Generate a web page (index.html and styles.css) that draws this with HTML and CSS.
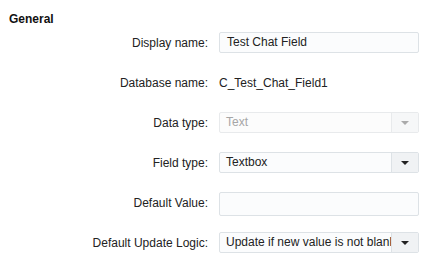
FILE: index.html
```html
<!DOCTYPE html>
<html lang="en">
<head>
    <meta charset="UTF-8">
    <title>Field settings</title>
    <link rel="stylesheet" href="styles.css">
</head>
<body>
    <div class="section">
        <h3 class="section-title">General</h3>
        <div class="form-grid">
            <label class="field-label">Display name:</label>
            <div class="text-input">Test Chat Field</div>

            <label class="field-label">Database name:</label>
            <div class="plain-value">C_Test_Chat_Field1</div>

            <label class="field-label">Data type:</label>
            <div class="select disabled">
                <span class="select-value">Text</span>
                <span class="select-btn"><span class="caret"></span></span>
            </div>

            <label class="field-label">Field type:</label>
            <div class="select">
                <span class="select-value">Textbox</span>
                <span class="select-btn"><span class="caret"></span></span>
            </div>

            <label class="field-label">Default Value:</label>
            <div class="text-input tall"></div>

            <label class="field-label">Default Update Logic:</label>
            <div class="select">
                <span class="select-value">Update if new value is not blank</span>
                <span class="select-btn"><span class="caret"></span></span>
            </div>
        </div>
    </div>
</body>
</html>
```

FILE: styles.css
```css
* {
    margin: 0;
    padding: 0;
    box-sizing: border-box;
}
body {
    font-family: "Liberation Sans", Arial, sans-serif;
    font-size: 12px;
    color: #222;
    background: #fff;
}
.section {
    padding: 12px 9px;
}
.section-title {
    font-size: 12px;
    font-weight: bold;
    line-height: 14px;
    color: #111;
    margin-bottom: 6px;
}
.form-grid {
    display: grid;
    grid-template-columns: 199px 200px;
    grid-auto-rows: 21px;
    column-gap: 11px;
    row-gap: 19px;
    align-items: center;
}
.field-label {
    text-align: right;
    white-space: nowrap;
    color: #222;
}
.text-input {
    height: 21px;
    border: 1px solid #dde2e6;
    border-radius: 2px;
    background: #fbfcfd;
    padding: 0 7px;
    line-height: 19px;
    color: #222;
}
.text-input.tall {
    height: 24px;
    align-self: start;
}
.plain-value {
    color: #222;
}
.select {
    display: flex;
    height: 21px;
    border: 1px solid #dde2e6;
    border-radius: 2px;
    background: #fbfcfd;
    overflow: hidden;
}
.select-value {
    flex: 1;
    padding: 0 6px;
    line-height: 19px;
    white-space: nowrap;
    overflow: hidden;
}
.select-btn {
    width: 27px;
    border-left: 1px solid #dde2e6;
    background: #f0f2f4;
    display: flex;
    align-items: center;
    justify-content: center;
}
.caret {
    width: 0;
    height: 0;
    border-left: 4px solid transparent;
    border-right: 4px solid transparent;
    border-top: 4px solid #222;
}
.select.disabled {
    background: #fcfcfc;
    border-color: #e8eaec;
}
.select.disabled .select-value {
    color: #a6a6a6;
}
.select.disabled .select-btn {
    background: #f6f7f8;
    border-left-color: #e8eaec;
}
.select.disabled .caret {
    border-top-color: #aaa;
}
```
